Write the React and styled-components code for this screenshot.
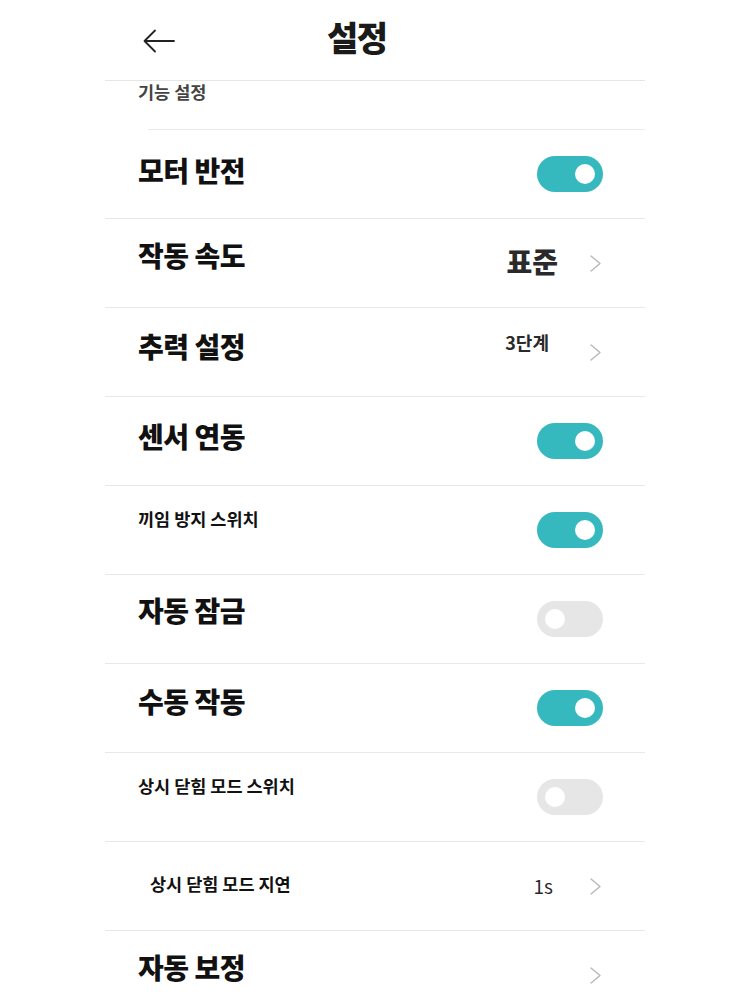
import React from 'react';
import styled, { createGlobalStyle } from 'styled-components';

const GlobalStyle = createGlobalStyle`
  body {
    margin: 0;
    background: #ffffff;
    font-family: "Noto Sans CJK KR", "Noto Sans", sans-serif;
    color: #111;
  }
`;

const Page = styled.div`
  width: 540px;
  margin: 0 auto;
  background: #fff;
`;

const Header = styled.div`
  display: flex;
  align-items: center;
  height: 81px;
  box-sizing: border-box;
  padding-left: 38px;
  border-bottom: 1px solid #e6e6e6;
`;

const BackButton = styled.div`
  display: flex;
  width: 32px;
  height: 24px;
  margin-top: 2px;
`;

const Title = styled.h1`
  margin: 0 0 8px 152px;
  font-size: 34px;
  font-weight: 900;
  letter-spacing: -1.5px;
  color: #1a1a1a;
`;

const SectionHeader = styled.div`
  height: 48px;
  padding-left: 33px;
  font-size: 17.5px;
  line-height: 22px;
  font-weight: 700;
  color: #444;
`;

const Rule = styled.div`
  height: 1px;
  margin-left: ${p => p.$inset || 0}px;
  background: #ebebeb;
`;

const Row = styled.div`
  display: flex;
  align-items: center;
  justify-content: space-between;
  height: 89px;
  box-sizing: border-box;
  padding: 0 42px 0 ${p => p.$indent || 33}px;
  border-bottom: 1px solid #e8e8e8;
`;

const Label = styled.div`
  font-size: ${p => (p.$small ? 17.5 : 28)}px;
  font-weight: ${p => (p.$small ? 700 : 900)};
  letter-spacing: ${p => (p.$small ? 0 : -0.5)}px;
  color: #111;
  margin-bottom: ${p => p.$lift || 0}px;
  white-space: nowrap;
`;

const Right = styled.div`
  display: flex;
  align-items: center;
`;

const Value = styled.div`
  font-size: ${p => p.$size}px;
  font-weight: ${p => p.$weight};
  color: #2a2a2a;
  margin-right: ${p => p.$gap}px;
  margin-bottom: ${p => p.$lift || 0}px;
`;

const Chevron = styled.div`
  display: flex;
  width: 14px;
  height: 18px;
`;

const Track = styled.div`
  display: flex;
  align-items: center;
  justify-content: ${p => (p.$on ? 'flex-end' : 'flex-start')};
  width: 66px;
  height: 36px;
  box-sizing: border-box;
  padding: 0 8px;
  border-radius: 18px;
  background: ${p => (p.$on ? '#35b8be' : '#e6e6e6')};
`;

const Knob = styled.div`
  width: 20px;
  height: 20px;
  border-radius: 50%;
  background: #fff;
`;

function Toggle({ on }) {
  return (
    <Track $on={on}>
      <Knob />
    </Track>
  );
}

function ChevronIcon() {
  return (
    <Chevron>
      <svg width="14" height="18" viewBox="0 0 14 18" fill="none">
        <polyline points="2,2 11,9.5 2,17" stroke="#b8b8b8" strokeWidth="1.4" strokeLinecap="round" strokeLinejoin="round" />
      </svg>
    </Chevron>
  );
}

const rows = [
  { label: '모터 반전', lift: 8, toggle: true },
  { label: '작동 속도', lift: 16, value: '표준', size: 28, weight: 900, gap: 31, vlift: 4 },
  { label: '추력 설정', lift: 12, value: '3단계', size: 18, weight: 700, gap: 40, vlift: 20 },
  { label: '센서 연동', lift: 10, toggle: true },
  { label: '끼임 방지 스위치', small: true, lift: 24, toggle: true },
  { label: '자동 잠금', lift: 18, toggle: false },
  { label: '수동 작동', lift: 14, toggle: true },
  { label: '상시 닫힘 모드 스위치', small: true, lift: 24, toggle: false },
  { label: '상시 닫힘 모드 지연', small: true, lift: 6, indent: 45, value: '1s', size: 19, weight: 400, gap: 36, vlift: 2 },
  { label: '자동 보정', lift: 16, link: true },
];

export default function App() {
  return (
    <Page>
      <GlobalStyle />
      <Header>
        <BackButton>
          <svg width="32" height="24" viewBox="0 0 32 24" fill="none">
            <path d="M31 12H2M12 1.5L1.5 12L12 22.5" stroke="#222" strokeWidth="1.8" strokeLinecap="round" strokeLinejoin="round" />
          </svg>
        </BackButton>
        <Title>설정</Title>
      </Header>
      <SectionHeader>기능 설정</SectionHeader>
      <Rule $inset={43} />
      {rows.map(r => (
        <Row key={r.label} $indent={r.indent}>
          <Label $small={r.small} $lift={r.lift}>{r.label}</Label>
          {typeof r.toggle === 'boolean' ? (
            <Toggle on={r.toggle} />
          ) : (
            <Right>
              {r.value && (
                <Value $size={r.size} $weight={r.weight} $gap={r.gap} $lift={r.vlift}>{r.value}</Value>
              )}
              <ChevronIcon />
            </Right>
          )}
        </Row>
      ))}
    </Page>
  );
}
